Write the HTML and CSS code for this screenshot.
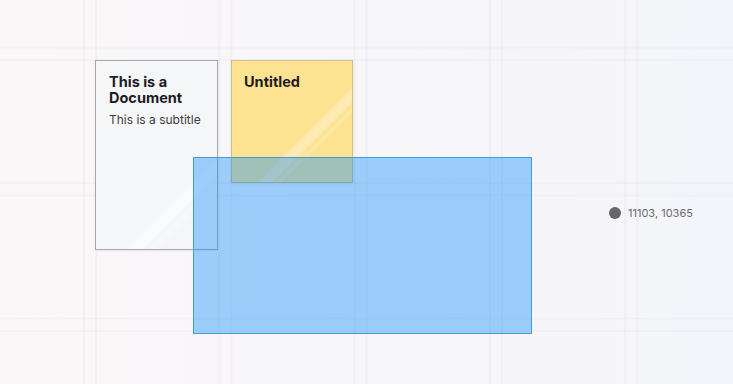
FILE: index.html
```html
<!DOCTYPE html>
<html>
<head>
<meta charset="utf-8">
<link rel="stylesheet" href="styles.css">
</head>
<body>
<div class="canvas">
  <div class="grid"></div>
  <div class="shape doc">
    <div class="doc-title">This is a Document</div>
    <div class="doc-sub">This is a subtitle</div>
    <div class="glare"></div>
  </div>
  <div class="shape sticky">
    <div class="sticky-title">Untitled</div>
    <div class="glare"></div>
  </div>
  <div class="shape selection"></div>
  <div class="coords"><span class="dot"></span><span class="coords-text">11103, 10365</span></div>
</div>
</body>
</html>
```

FILE: styles.css
```css
html, body {
  margin: 0;
  padding: 0;
  width: 733px;
  height: 384px;
  overflow: hidden;
}
body {
  font-family: Inter, "Noto Sans", sans-serif;
}
.canvas {
  position: relative;
  width: 733px;
  height: 384px;
  background: linear-gradient(to right, #faf7f8 0%, #f7f6f9 45%, #f4f5fa 100%);
  overflow: hidden;
}
.grid {
  position: absolute;
  inset: 0;
  background-image:
    linear-gradient(to right, rgba(60,60,90,0.035) 0, rgba(60,60,90,0.035) 1.5px, transparent 1.5px),
    linear-gradient(to right, rgba(60,60,90,0.035) 0, rgba(60,60,90,0.035) 1.5px, transparent 1.5px),
    linear-gradient(to bottom, rgba(60,60,90,0.03) 0, rgba(60,60,90,0.03) 2px, transparent 2px),
    linear-gradient(to bottom, rgba(60,60,90,0.03) 0, rgba(60,60,90,0.03) 2px, transparent 2px);
  background-size: 135.3px 100%, 135.3px 100%, 100% 135.5px, 100% 135.5px;
  background-position: 83px 0, 95px 0, 0 46.5px, 0 59px;
}
.shape {
  position: absolute;
  box-sizing: border-box;
  overflow: hidden;
}
.doc {
  left: 95px;
  top: 60px;
  width: 123px;
  height: 190px;
  background: #f4f6f8;
  border: 1px solid #a8a9ae;
  box-shadow: 0 1px 2px rgba(0,0,0,0.08);
  padding: 13px 8px 0 13px;
}
.doc-title {
  font-weight: 700;
  font-size: 14.5px;
  line-height: 16px;
  color: #1c1c1f;
  width: 95px;
}
.doc-sub {
  margin-top: 6px;
  font-size: 12px;
  line-height: 15px;
  color: #3c3c42;
  white-space: nowrap;
}
.glare {
  position: absolute;
  inset: 0;
  pointer-events: none;
  background: linear-gradient(135deg,
    transparent 70%,
    rgba(255,255,255,0.5) 72%,
    rgba(255,255,255,0.5) 75%,
    transparent 77%,
    rgba(255,255,255,0.3) 79%,
    transparent 81%);
}
.sticky {
  left: 231px;
  top: 60px;
  width: 122px;
  height: 123px;
  background: #fde292;
  border: 1px solid #d4c185;
  box-shadow: 0 1px 2px rgba(0,0,0,0.08);
  padding: 12px 12px 0 12px;
}
.sticky .glare {
  background: linear-gradient(135deg,
    transparent 60%,
    rgba(255,255,255,0.3) 62%,
    rgba(255,255,255,0.3) 66%,
    transparent 68%,
    rgba(255,255,255,0.2) 70%,
    transparent 72%);
}
.sticky-title {
  font-weight: 700;
  font-size: 14.5px;
  line-height: 18px;
  color: #1c1c1f;
}
.selection {
  left: 193px;
  top: 157px;
  width: 339px;
  height: 177px;
  background: rgba(0, 132, 250, 0.37);
  border: 1px solid #3f9ddc;
}
.coords {
  position: absolute;
  left: 609px;
  top: 206px;
  display: flex;
  align-items: center;
  gap: 7px;
}
.dot {
  width: 12px;
  height: 12px;
  border-radius: 50%;
  background: #66656d;
}
.coords-text {
  font-size: 11px;
  line-height: 14px;
  color: #6a6a72;
}
```
